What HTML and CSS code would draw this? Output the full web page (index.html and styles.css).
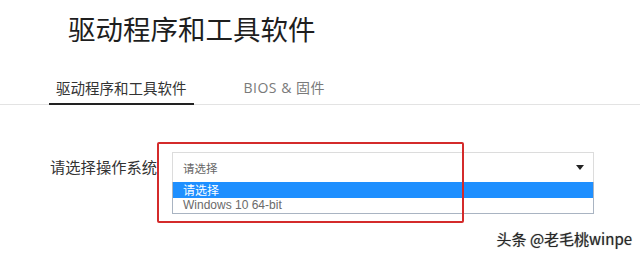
FILE: index.html
```html
<!DOCTYPE html>
<html lang="zh-CN">
<head>
<meta charset="utf-8">
<link rel="stylesheet" href="styles.css">
</head>
<body>
<div class="page">
  <h1 class="title">驱动程序和工具软件</h1>
  <div class="tabs">
    <div class="tab active">驱动程序和工具软件</div>
    <div class="tab tab-bios">BIOS &amp; 固件</div>
  </div>
  <div class="form-row">
    <label class="label">请选择操作系统</label>
    <div class="select-wrap">
      <div class="select">
        <span class="placeholder">请选择</span>
        <span class="arrow"></span>
      </div>
      <ul class="options">
        <li class="option selected">请选择</li>
        <li class="option latin">Windows 10 64-bit</li>
      </ul>
    </div>
    <div class="annotation"></div>
  </div>
  <div class="watermark">头条 @老毛桃winpe</div>
</div>
</body>
</html>
```
FILE: styles.css
```css
html, body {
  margin: 0;
  padding: 0;
  background: #fff;
}
body {
  font-family: "Noto Sans CJK SC", "Noto Sans", sans-serif;
  color: #333;
  width: 640px;
  height: 258px;
  overflow: hidden;
}
.page {
  position: relative;
  height: 258px;
}
.title {
  margin: 0;
  padding: 10px 0 0 68px;
  font-size: 27.5px;
  font-weight: 400;
  line-height: 36px;
  color: #1e1e1e;
}
.tabs {
  display: flex;
  margin-top: 32px;
  border-bottom: 1px solid #e3e3e3;
  padding-left: 49px;
}
.tab {
  font-size: 14.5px;
  line-height: 20px;
  padding: 0 7px 5px 7px;
  color: #7a7a7a;
  border-bottom: 2px solid transparent;
  margin-bottom: -1px;
}
.tab.active {
  color: #333;
  border-bottom-color: #222;
  margin-right: 43px;
}
.tab-bios {
  font-family: "Open Sans", "Noto Sans CJK SC", sans-serif;
  font-size: 14px;
  letter-spacing: 0.5px;
}
.form-row {
  position: relative;
  display: flex;
  align-items: flex-start;
  margin-top: 47px;
  padding-left: 50px;
}
.label {
  font-size: 15.3px;
  line-height: 29px;
  color: #333;
  width: 122px;
}
.select-wrap {
  width: 422px;
}
.select {
  display: flex;
  align-items: center;
  justify-content: space-between;
  height: 29px;
  border: 1px solid #dcdcdc;
  border-bottom: none;
  padding: 0 9px 0 10px;
  background: #fff;
}
.placeholder {
  font-size: 11.5px;
  color: #666;
}
.arrow {
  width: 0;
  height: 0;
  border-left: 4px solid transparent;
  border-right: 4px solid transparent;
  border-top: 5px solid #222;
}
.options {
  list-style: none;
  margin: 0;
  padding: 0;
  border: 1px solid #a9b4c2;
  border-top: none;
}
.option {
  height: 15.5px;
  line-height: 15.5px;
  padding-left: 10px;
  color: #6a6a6a;
  overflow: hidden;
}
.option.selected {
  background: #1e8fff;
  color: #fff;
  font-size: 12px;
}
.option.latin {
  font-family: "Liberation Sans", Arial, sans-serif;
  font-size: 12px;
}
.annotation {
  position: absolute;
  left: 157px;
  top: -10px;
  width: 303px;
  height: 77px;
  border: 2px solid #d42b2b;
  border-radius: 2px;
}
.watermark {
  position: absolute;
  right: 8px;
  top: 228px;
  font-size: 15px;
  color: #262626;
  text-shadow: 0 0 1px #888;
}
```
